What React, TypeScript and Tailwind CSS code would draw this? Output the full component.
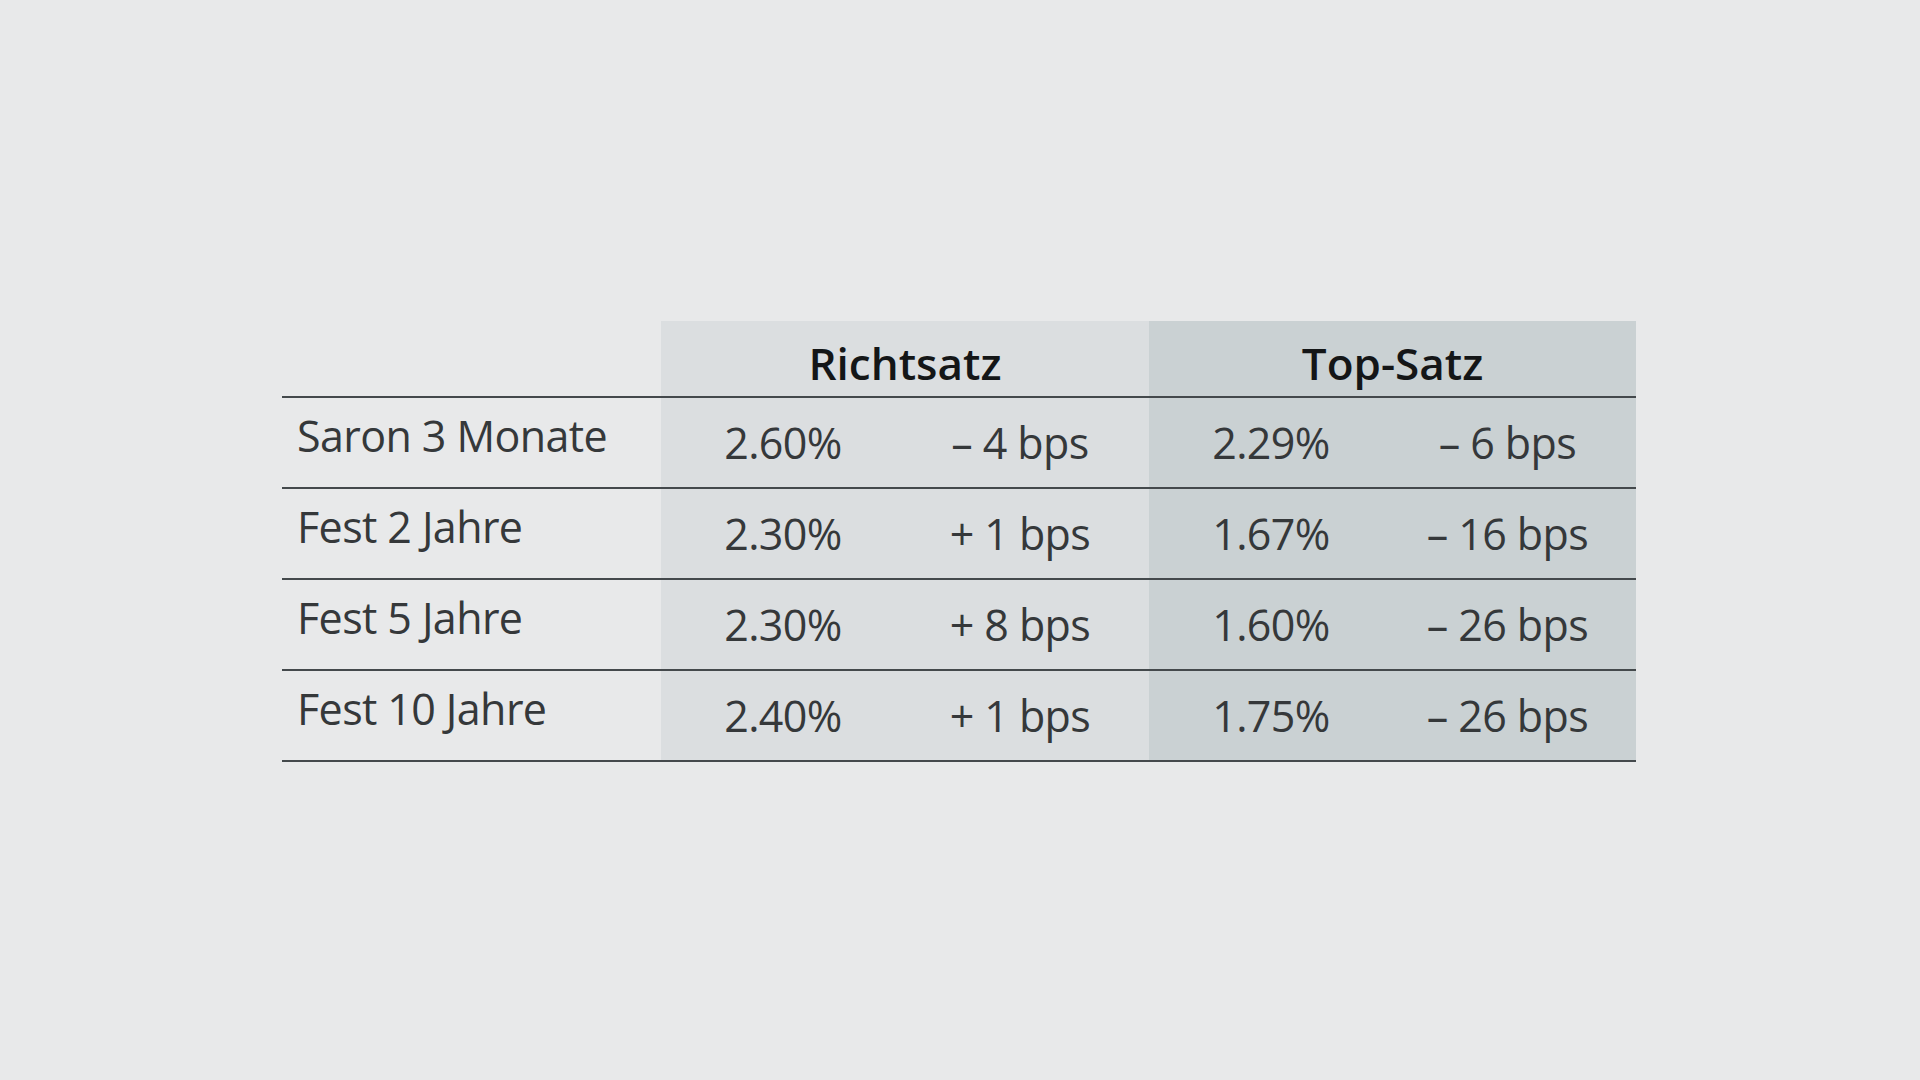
import React from "react";

const rows = [
  { label: "Saron 3 Monate", r1: "2.60%", r2: "– 4 bps", t1: "2.29%", t2: "– 6 bps" },
  { label: "Fest 2 Jahre", r1: "2.30%", r2: "+ 1 bps", t1: "1.67%", t2: "– 16 bps" },
  { label: "Fest 5 Jahre", r1: "2.30%", r2: "+ 8 bps", t1: "1.60%", t2: "– 26 bps" },
  { label: "Fest 10 Jahre", r1: "2.40%", r2: "+ 1 bps", t1: "1.75%", t2: "– 26 bps" },
];

export default function App() {
  return (
    <div
      className="w-[1920px] h-[1080px] bg-[#e8e9ea] pl-[282px] pt-[321px] text-[#35383a]"
      style={{ fontFamily: '"Open Sans", "Noto Sans", sans-serif' }}
    >
      <div className="w-[1354px]">
        <div className="grid grid-cols-[379px_488px_487px] h-[77px] border-b-2 border-[#44494c]">
          <div />
          <div className="bg-[#dbdee0] flex items-center justify-center pt-[8px] text-[44px] font-semibold text-[#141617]">
            Richtsatz
          </div>
          <div className="bg-[#cad1d3] flex items-center justify-center pt-[8px] text-[44px] font-semibold text-[#141617]">
            Top-Satz
          </div>
        </div>
        {rows.map((r) => (
          <div
            key={r.label}
            className="grid grid-cols-[379px_244px_244px_244px_243px] h-[91px] border-b-2 border-[#44494c] text-[43px] font-normal tracking-[-0.6px]"
          >
            <div className="pl-[15px] leading-[76px]">{r.label}</div>
            <div className="bg-[#dbdee0] flex items-center justify-center pt-[1px]">{r.r1}</div>
            <div className="bg-[#dbdee0] flex items-center justify-center pt-[1px] pr-[14px]">{r.r2}</div>
            <div className="bg-[#cad1d3] flex items-center justify-center pt-[1px]">{r.t1}</div>
            <div className="bg-[#cad1d3] flex items-center justify-center pt-[1px] pr-[14px]">{r.t2}</div>
          </div>
        ))}
      </div>
    </div>
  );
}
